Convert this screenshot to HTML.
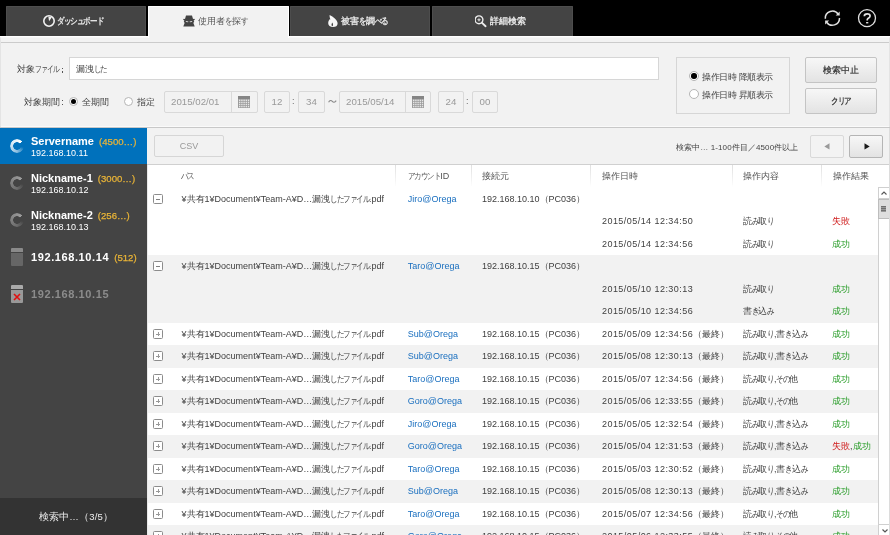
<!DOCTYPE html>
<html lang="ja">
<head>
<meta charset="utf-8">
<style>
*{box-sizing:border-box;margin:0;padding:0}
html,body{width:890px;height:535px;overflow:hidden;background:#f2f2f2;font-family:"Liberation Sans",sans-serif;font-size:9px;color:#444}
i{font-style:normal}
i.k{display:inline-block;width:.72em;transform:scaleX(.84);transform-origin:0 0}
i.k2{width:.67em;transform:scaleX(.76)}
i.col{display:inline-block;width:.6em;margin-left:-.38em}
.a{position:absolute;white-space:nowrap}
#top{position:absolute;left:0;top:0;width:890px;height:36px;background:#000;z-index:2}
#wl{position:absolute;left:0;top:36px;width:890px;height:1px;background:#fff}
.tab{position:absolute;top:6px;height:30px;background:#444;border:1px solid #4d4d4d;border-bottom:0;border-radius:1px 1px 0 0;color:#eee}
.tab.act{background:#f2f2f2;border:1px solid #fff;border-bottom:0;height:32px;top:6px;color:#555;z-index:3}
.tab .t{position:absolute;top:8px;font-size:9.2px;line-height:12px;-webkit-text-stroke:.3px #eee}
.tab.act .t{-webkit-text-stroke:0}
#form{position:absolute;left:0;top:37px;width:890px;height:91px;background:#f2f2f2;border-top:1px solid #f7f7f7;border-left:1px solid #e4e4e4;border-right:1px solid #e4e4e4}
.hl{position:absolute;height:1px}
.dot{position:absolute;width:1.6px;height:1.6px;background:#555}
.inp{position:absolute;background:#fff;border:1px solid #d6d6d6}
.dis{position:absolute;background:#f2f2f2;border:1px solid #d9d9d9;border-radius:2px;color:#999;font-size:9.7px;text-align:center;line-height:20px}
.radio{position:absolute;width:9px;height:9px;border-radius:50%;background:#fff;border:1px solid #b5b5b5}
.radio.on:after{content:"";position:absolute;left:50%;top:50%;width:5.5px;height:5.5px;margin:-2.75px 0 0 -2.75px;border-radius:50%;background:#000}
.btn{position:absolute;border:1px solid #c4c4c4;border-radius:2px;background:linear-gradient(#f7f7f7,#e3e3e3);text-align:center;color:#333}
#side{position:absolute;left:0;top:128px;width:147px;height:407px;background:#444}
#status{position:absolute;left:0;top:498px;width:147px;height:37px;background:#333;color:#eee;text-align:center;line-height:37px;font-size:9.5px;padding-left:5px;letter-spacing:.2px}
.srv{position:absolute;left:0;width:147px;height:37px}
.srv .n{position:absolute;left:31px;font-weight:bold;font-size:11px;color:#fff;white-space:nowrap}
.srv .c{color:#e9b437;font-weight:normal;font-size:9.6px;margin-left:2px;-webkit-text-stroke:.25px #e9b437}
.srv .ip{position:absolute;left:31px;font-size:9px;color:#fff}
.spin{position:absolute;width:14px;height:14px;border-radius:50%;-webkit-mask:radial-gradient(circle,transparent 3.5px,#000 4.1px)}
#main{position:absolute;left:147px;top:128px;width:743px;height:407px;background:#fff}
#tb{position:absolute;left:0;top:0;width:743px;height:37px;background:#f2f2f2;border-bottom:1px solid #d0d0d0}
#hdr{position:absolute;left:0;top:37px;width:743px;height:22.5px;background:#fff}
.hc{position:absolute;top:0;line-height:22px;font-size:9px;color:#555;white-space:nowrap}
.sep{position:absolute;top:0;width:1px;height:22px;background:linear-gradient(#e0e0e0,#f4f4f4 70%,#fff)}
.row{position:absolute;left:0;width:731px;height:22.5px}
.row.g{background:#f2f2f2}
.cell{position:absolute;top:0;line-height:22.5px;font-size:9px;color:#404040;white-space:nowrap}
.blue{color:#1a6fbf}
.ok{color:#279c27}
.ng{color:#d02020}
.pm{position:absolute;left:6px;top:6.5px;width:10px;height:9.5px;border:1px solid #8f8f8f;border-radius:1.5px;background:#fff}
.pm:before{content:"";position:absolute;left:2.5px;top:3.3px;width:3.5px;height:1px;background:#7a7a7a}
.pm.plus:after{content:"";position:absolute;left:3.75px;top:1.8px;width:1px;height:4px;background:#8a8a8a}
#sb{position:absolute;left:731px;top:59px;width:12px;height:348px;background:#fff;border:1px solid #d0d0d0;border-bottom:0}
i.d{letter-spacing:.45px}
</style>
</head>
<body style="will-change:transform">
<div id="top">
  <div id="wl"></div>
  <div class="tab" style="left:6px;width:140px">
    <svg class="a" style="left:35.5px;top:8px" width="12" height="12" viewBox="0 0 12 12"><circle cx="6" cy="6" r="5.2" fill="none" stroke="#f2f2f2" stroke-width="1.6"/><path d="M6.1 6.2 L5.3 1.6 L8.8 2.3 Z" fill="#f2f2f2"/></svg>
    <div class="t" style="left:50px"><i class="k">ダ</i><i class="k">ッ</i><i class="k">シ</i><i class="k">ュ</i><i class="k">ボ</i><i class="k">ー</i><i class="k">ド</i></div>
  </div>
  <div class="tab act" style="left:148px;width:141px">
    <svg class="a" style="left:33.5px;top:8px" width="12" height="12" viewBox="0 0 12 12"><path d="M3 0.4 L9 0.4 L10 4 L2 4 Z" fill="#444"/><path d="M0.3 3.9 H11.7 V5.1 H0.3 Z" fill="#444"/><path d="M1.3 5.1 H10.7 L11.2 7.1 L10.3 7.7 L11.7 11.6 H0.3 L1.7 7.7 L0.8 7.1 Z" fill="#444"/><path d="M2.6 5.9 L5.4 6.5 L5.1 7.3 L3.2 7.0 Z M9.4 5.9 L6.6 6.5 L6.9 7.3 L8.8 7.0 Z" fill="#e8e8e8"/></svg>
    <div class="t" style="left:49px">使用者<i class="k">を</i>探<i class="k">す</i></div>
  </div>
  <div class="tab" style="left:290px;width:140px">
    <svg class="a" style="left:36.5px;top:8px" width="10" height="12" viewBox="0 0 10 12"><path d="M1.6 0 C3.5 0.8 5.3 2 6.8 3.5 C8.6 5.3 9.6 6.9 9.6 8.4 C9.6 10.6 7.8 12 5 12 C2.2 12 0.2 10.6 0.2 8.2 C0.2 6.6 0.9 5.2 1.9 4.1 L2.4 4.7 C2.1 3.2 1.4 1.6 1.6 0 Z" fill="#f7f7f7"/><path d="M4.3 11.2 C3.3 10.8 3.2 9.2 4.3 7.5 C5.4 9.2 5.3 10.8 4.3 11.2 Z" fill="#444"/></svg>
    <div class="t" style="left:50px">被害<i class="k">を</i>調<i class="k">べ</i><i class="k">る</i></div>
  </div>
  <div class="tab" style="left:432px;width:141px">
    <svg class="a" style="left:42px;top:8px" width="13" height="13" viewBox="0 0 13 13"><circle cx="4" cy="4.8" r="3.9" fill="none" stroke="#eee" stroke-width="1.4"/><path d="M6.8 7.6 L10.6 11.2" stroke="#eee" stroke-width="1.9" stroke-linecap="round"/><path d="M4 2.6 L4.6 4.2 L6.2 4.8 L4.6 5.4 L4 7 L3.4 5.4 L1.8 4.8 L3.4 4.2 Z" fill="#e0e0e0"/></svg>
    <div class="t" style="left:57px">詳細検索</div>
  </div>
  <svg class="a" style="left:822px;top:8px" width="20" height="20" viewBox="0 0 20 20"><path d="M3.3 10.7 A7.1 7.1 0 0 1 16.3 6.3" fill="none" stroke="#e0e0e0" stroke-width="1.5"/><path d="M17.7 3.6 L17.7 7.6 L13.7 7.6 Z" fill="#e0e0e0"/><path d="M17.5 10 A7.1 7.1 0 0 1 4.6 14.2" fill="none" stroke="#e0e0e0" stroke-width="1.5"/><path d="M3.1 16.6 L3.1 12.6 L7.1 12.6 Z" fill="#e0e0e0"/></svg>
  <svg class="a" style="left:856px;top:7px" width="22" height="22" viewBox="0 0 22 22"><circle cx="11" cy="11.1" r="8.5" fill="none" stroke="#e0e0e0" stroke-width="1.3"/><path d="M8.3 9.3 C8.3 7.5 9.5 6.9 11.2 6.9 C13 6.9 14.1 7.8 14.1 9.1 C14.1 10.6 12.6 11 11.6 11.8 C11.2 12.2 11.2 12.7 11.2 13.5" fill="none" stroke="#e0e0e0" stroke-width="1.7"/><rect x="10.1" y="15" width="2.2" height="1.4" fill="#e0e0e0"/></svg>
</div>

<div id="form">
  <div class="hl" style="left:0;top:4px;width:888px;background:#cbcbcb"></div>
  <div class="hl" style="left:0;top:88px;width:888px;background:#fafafa"></div>
  <div class="hl" style="left:-1px;top:89px;width:890px;background:#c8c8c8"></div>
  <div class="a" style="left:16px;top:25px">対象<i class="k k2">フ</i><i class="k k2">ァ</i><i class="k k2">イ</i><i class="k k2">ル</i></div>
  <div class="inp" style="left:68px;top:19px;width:590px;height:23px"><div class="a" style="left:6px;top:5px">漏洩<i class="k">し</i><i class="k">た</i></div></div>
  <div class="a" style="left:23px;top:58px">対象期間</div><div class="dot" style="left:60.5px;top:61.5px"></div><div class="dot" style="left:60.5px;top:65.5px"></div><div class="dot" style="left:60.8px;top:29.5px"></div><div class="dot" style="left:60.8px;top:33.3px"></div>
  <div class="radio on" style="left:68px;top:59px"></div>
  <div class="a" style="left:81px;top:58px">全期間</div>
  <div class="radio" style="left:123px;top:59px"></div>
  <div class="a" style="left:136px;top:58px">指定</div>
  <div class="dis" style="left:163px;top:53px;width:94px;height:22px;text-align:left;padding-left:6px">2015/02/01</div>
  <div class="a" style="left:230px;top:54px;width:1px;height:20px;background:#d9d9d9"></div>
  <svg class="a" style="left:237px;top:58px" width="12" height="12" viewBox="0 0 12 12"><rect x="0" y="0" width="12" height="12" rx=".6" fill="#9c9c9c"/><rect x="0" y="0" width="12" height="3" fill="#858585"/><rect x="1" y="3.6" width="1.4" height="1.4" fill="#e6e6e6"/><rect x="1" y="5.7" width="1.4" height="1.4" fill="#e6e6e6"/><rect x="1" y="7.8" width="1.4" height="1.4" fill="#e6e6e6"/><rect x="1" y="9.9" width="1.4" height="1.4" fill="#e6e6e6"/><rect x="3.2" y="3.6" width="1.4" height="1.4" fill="#e6e6e6"/><rect x="3.2" y="5.7" width="1.4" height="1.4" fill="#e6e6e6"/><rect x="3.2" y="7.8" width="1.4" height="1.4" fill="#e6e6e6"/><rect x="3.2" y="9.9" width="1.4" height="1.4" fill="#e6e6e6"/><rect x="5.4" y="3.6" width="1.4" height="1.4" fill="#e6e6e6"/><rect x="5.4" y="5.7" width="1.4" height="1.4" fill="#e6e6e6"/><rect x="5.4" y="7.8" width="1.4" height="1.4" fill="#e6e6e6"/><rect x="5.4" y="9.9" width="1.4" height="1.4" fill="#e6e6e6"/><rect x="7.6" y="3.6" width="1.4" height="1.4" fill="#e6e6e6"/><rect x="7.6" y="5.7" width="1.4" height="1.4" fill="#e6e6e6"/><rect x="7.6" y="7.8" width="1.4" height="1.4" fill="#e6e6e6"/><rect x="7.6" y="9.9" width="1.4" height="1.4" fill="#e6e6e6"/><rect x="9.8" y="3.6" width="1.4" height="1.4" fill="#e6e6e6"/><rect x="9.8" y="5.7" width="1.4" height="1.4" fill="#e6e6e6"/><rect x="9.8" y="7.8" width="1.4" height="1.4" fill="#e6e6e6"/><rect x="9.8" y="9.9" width="1.4" height="1.4" fill="#e6e6e6"/></svg>
  <div class="dis" style="left:263px;top:53px;width:26px;height:22px">12</div>
  <div class="a" style="left:291px;top:58px;color:#666">:</div>
  <div class="dis" style="left:297px;top:53px;width:27px;height:22px">34</div>
  <svg class="a" style="left:326.5px;top:61px" width="9" height="5" viewBox="0 0 9 5"><path d="M0.6 3.2 C1.8 1.2 3.2 1 4.3 2.3 C5.4 3.6 6.8 3.6 8.2 1.6" fill="none" stroke="#8a8a8a" stroke-width="1.1"/></svg>
  <div class="dis" style="left:338px;top:53px;width:92px;height:22px;text-align:left;padding-left:6px">2015/05/14</div>
  <div class="a" style="left:404px;top:54px;width:1px;height:20px;background:#d9d9d9"></div>
  <svg class="a" style="left:411px;top:58px" width="12" height="12" viewBox="0 0 12 12"><rect x="0" y="0" width="12" height="12" rx=".6" fill="#9c9c9c"/><rect x="0" y="0" width="12" height="3" fill="#858585"/><rect x="1" y="3.6" width="1.4" height="1.4" fill="#e6e6e6"/><rect x="1" y="5.7" width="1.4" height="1.4" fill="#e6e6e6"/><rect x="1" y="7.8" width="1.4" height="1.4" fill="#e6e6e6"/><rect x="1" y="9.9" width="1.4" height="1.4" fill="#e6e6e6"/><rect x="3.2" y="3.6" width="1.4" height="1.4" fill="#e6e6e6"/><rect x="3.2" y="5.7" width="1.4" height="1.4" fill="#e6e6e6"/><rect x="3.2" y="7.8" width="1.4" height="1.4" fill="#e6e6e6"/><rect x="3.2" y="9.9" width="1.4" height="1.4" fill="#e6e6e6"/><rect x="5.4" y="3.6" width="1.4" height="1.4" fill="#e6e6e6"/><rect x="5.4" y="5.7" width="1.4" height="1.4" fill="#e6e6e6"/><rect x="5.4" y="7.8" width="1.4" height="1.4" fill="#e6e6e6"/><rect x="5.4" y="9.9" width="1.4" height="1.4" fill="#e6e6e6"/><rect x="7.6" y="3.6" width="1.4" height="1.4" fill="#e6e6e6"/><rect x="7.6" y="5.7" width="1.4" height="1.4" fill="#e6e6e6"/><rect x="7.6" y="7.8" width="1.4" height="1.4" fill="#e6e6e6"/><rect x="7.6" y="9.9" width="1.4" height="1.4" fill="#e6e6e6"/><rect x="9.8" y="3.6" width="1.4" height="1.4" fill="#e6e6e6"/><rect x="9.8" y="5.7" width="1.4" height="1.4" fill="#e6e6e6"/><rect x="9.8" y="7.8" width="1.4" height="1.4" fill="#e6e6e6"/><rect x="9.8" y="9.9" width="1.4" height="1.4" fill="#e6e6e6"/></svg>
  <div class="dis" style="left:437px;top:53px;width:26px;height:22px">24</div>
  <div class="a" style="left:465px;top:58px;color:#666">:</div>
  <div class="dis" style="left:471px;top:53px;width:26px;height:22px">00</div>
  <div class="a" style="left:675px;top:19px;width:114px;height:57px;border:1px solid #d6d6d6"></div>
  <div class="radio on" style="left:688px;top:33px;width:10px;height:10px"></div>
  <div class="a" style="left:701px;top:33px;letter-spacing:-.4px">操作日時 降順表示</div>
  <div class="radio" style="left:688px;top:51px;width:10px;height:10px"></div>
  <div class="a" style="left:701px;top:51px;letter-spacing:-.4px">操作日時 昇順表示</div>
  <div class="btn" style="left:804px;top:19px;width:72px;height:26px;line-height:24px;-webkit-text-stroke:.2px #333">検索中止</div>
  <div class="btn" style="left:804px;top:50px;width:72px;height:26px;line-height:24px;-webkit-text-stroke:.2px #333"><i class="k">ク</i><i class="k">リ</i><i class="k">ア</i></div>
</div>

<div id="side">
  <div class="srv" style="top:0;height:36px;background:#0071bc">
    <div class="spin" style="left:10px;top:11px;background:conic-gradient(from 100deg,rgba(255,255,255,0) 0deg,rgba(255,255,255,.25) 30deg,rgba(255,255,255,.55) 80deg,rgba(255,255,255,.8) 170deg,#fff 305deg,rgba(255,255,255,0) 310deg)"></div>
    <div class="n" style="top:7px">Servername <span class="c">(4500…)</span></div>
    <div class="ip" style="top:20px">192.168.10.11</div>
  </div>
  <div class="srv" style="top:37px">
    <div class="spin" style="left:10px;top:11px;background:conic-gradient(from 100deg,rgba(110,110,110,0) 0deg,#555 30deg,#6c6c6c 80deg,#808080 170deg,#9c9c9c 305deg,rgba(110,110,110,0) 310deg)"></div>
    <div class="n" style="top:7px">Nickname-1 <span class="c">(3000…)</span></div>
    <div class="ip" style="top:20px">192.168.10.12</div>
  </div>
  <div class="srv" style="top:74px">
    <div class="spin" style="left:10px;top:11px;background:conic-gradient(from 100deg,rgba(110,110,110,0) 0deg,#555 30deg,#6c6c6c 80deg,#808080 170deg,#9c9c9c 305deg,rgba(110,110,110,0) 310deg)"></div>
    <div class="n" style="top:7px">Nickname-2 <span class="c">(256…)</span></div>
    <div class="ip" style="top:20px">192.168.10.13</div>
  </div>
  <div class="srv" style="top:111px">
    <div class="a" style="left:11px;top:9px;width:12px;height:18px;background:#666;border-radius:1px;border-top:4px solid #8a8a8a;box-shadow:inset 0 1px 0 #444"></div>
    <div class="n" style="top:12px"><i style="letter-spacing:.6px">192.168.10.14</i> <span class="c">(512)</span></div>
  </div>
  <div class="srv" style="top:148px">
    <div class="a" style="left:11px;top:9px;width:12px;height:18px;background:#999;border-radius:1px;border-top:4px solid #aaa;box-shadow:inset 0 1px 0 #444"></div>
    <svg class="a" style="left:13px;top:17px" width="8" height="8" viewBox="0 0 8 8"><path d="M1 1 L7 7 M7 1 L1 7" stroke="#e01010" stroke-width="1.6"/></svg>
    <div class="n" style="top:12px;color:#8c8c8c;letter-spacing:.6px">192.168.10.15</div>
  </div>
</div>
<div id="status">検索中…（3/5）</div>
<div id="main">
  <div id="tb">
    <div class="btn" style="left:7px;top:7px;width:70px;height:22px;line-height:20px;background:#f2f2f2;border-color:#d6d6d6;color:#999">CSV</div>
    <div class="a" style="left:529px;top:13.5px;font-size:8px;letter-spacing:.1px">検索中… 1-100件目／4500件以上</div>
    <div class="btn" style="left:663px;top:7px;width:34px;height:23px;background:#f3f3f3;border-color:#d9d9d9"><svg class="a" style="left:12.5px;top:7px" width="6" height="7" viewBox="0 0 6 7"><path d="M5.5 0.2 L5.5 6.6 L0.3 3.4 Z" fill="#9a9a9a"/></svg></div>
    <div class="btn" style="left:702px;top:7px;width:34px;height:23px;border-color:#b5b5b5"><svg class="a" style="left:13.5px;top:7px" width="6" height="7" viewBox="0 0 6 7"><path d="M0.5 0.2 L0.5 6.6 L5.7 3.4 Z" fill="#1a1a1a"/></svg></div>
  </div>
  <div id="hdr">
    <div class="hc" style="left:34px"><i class="k">パ</i><i class="k">ス</i></div>
    <div class="sep" style="left:248px"></div><div class="hc" style="left:261px"><i class="k">ア</i><i class="k">カ</i><i class="k">ウ</i><i class="k">ン</i><i class="k">ト</i>ID</div>
    <div class="sep" style="left:324px"></div><div class="hc" style="left:335px">接続元</div>
    <div class="sep" style="left:443px"></div><div class="hc" style="left:455px">操作日時</div>
    <div class="sep" style="left:585px"></div><div class="hc" style="left:596px">操作内容</div>
    <div class="sep" style="left:674px"></div><div class="hc" style="left:686px">操作結果</div>
  </div>
  <div class="row" style="top:59.5px"><svg class="a" style="left:6px;top:6.5px" width="10" height="10" viewBox="0 0 10 10"><rect x=".5" y=".5" width="9" height="9" rx="1" fill="#fff" stroke="#8c8c8c"/><path d="M3 5 H7" stroke="#808080" stroke-width="1" shape-rendering="crispEdges"/></svg><div class="cell" style="left:34.6px">¥共有1¥Document¥Team-A¥D…漏洩<i class="k">し</i><i class="k">た</i><i class="k">フ</i><i class="k">ァ</i><i class="k">イ</i><i class="k">ル</i>.pdf</div><div class="cell blue" style="left:260.8px">Jiro@Orega</div><div class="cell" style="left:335px">192.168.10.10（PC036）</div></div>
  <div class="row" style="top:82px"><div class="cell" style="left:455px"><i class="d">2015/05/14 12:34:50</i></div><div class="cell" style="left:596px">読<i class="k">み</i>取<i class="k">り</i></div><div class="cell" style="left:685px"><span class="ng">失敗</span></div></div>
  <div class="row" style="top:104.5px"><div class="cell" style="left:455px"><i class="d">2015/05/14 12:34:56</i></div><div class="cell" style="left:596px">読<i class="k">み</i>取<i class="k">り</i></div><div class="cell" style="left:685px"><span class="ok">成功</span></div></div>
  <div class="row g" style="top:127px"><svg class="a" style="left:6px;top:6px" width="10" height="10" viewBox="0 0 10 10"><rect x=".5" y=".5" width="9" height="9" rx="1" fill="#fff" stroke="#8c8c8c"/><path d="M3 5 H7" stroke="#808080" stroke-width="1" shape-rendering="crispEdges"/></svg><div class="cell" style="left:34.6px">¥共有1¥Document¥Team-A¥D…漏洩<i class="k">し</i><i class="k">た</i><i class="k">フ</i><i class="k">ァ</i><i class="k">イ</i><i class="k">ル</i>.pdf</div><div class="cell blue" style="left:260.8px">Taro@Orega</div><div class="cell" style="left:335px">192.168.10.15（PC036）</div></div>
  <div class="row g" style="top:149.5px"><div class="cell" style="left:455px"><i class="d">2015/05/10 12:30:13</i></div><div class="cell" style="left:596px">読<i class="k">み</i>取<i class="k">り</i></div><div class="cell" style="left:685px"><span class="ok">成功</span></div></div>
  <div class="row g" style="top:172px"><div class="cell" style="left:455px"><i class="d">2015/05/10 12:34:56</i></div><div class="cell" style="left:596px">書<i class="k">き</i>込<i class="k">み</i></div><div class="cell" style="left:685px"><span class="ok">成功</span></div></div>
  <div class="row" style="top:194.5px"><svg class="a" style="left:6px;top:6.5px" width="10" height="10" viewBox="0 0 10 10"><rect x=".5" y=".5" width="9" height="9" rx="1" fill="#fff" stroke="#8c8c8c"/><path d="M3 5 H7 M5 3 V7" stroke="#999" stroke-width="1" shape-rendering="crispEdges"/></svg><div class="cell" style="left:34.6px">¥共有1¥Document¥Team-A¥D…漏洩<i class="k">し</i><i class="k">た</i><i class="k">フ</i><i class="k">ァ</i><i class="k">イ</i><i class="k">ル</i>.pdf</div><div class="cell blue" style="left:260.8px">Sub@Orega</div><div class="cell" style="left:335px">192.168.10.15（PC036）</div><div class="cell" style="left:455px"><i class="d">2015/05/09 12:34:56</i>（最終）</div><div class="cell" style="left:596px">読<i class="k">み</i>取<i class="k">り</i>,書<i class="k">き</i>込<i class="k">み</i></div><div class="cell" style="left:685px"><span class="ok">成功</span></div></div>
  <div class="row g" style="top:217px"><svg class="a" style="left:6px;top:6px" width="10" height="10" viewBox="0 0 10 10"><rect x=".5" y=".5" width="9" height="9" rx="1" fill="#fff" stroke="#8c8c8c"/><path d="M3 5 H7 M5 3 V7" stroke="#999" stroke-width="1" shape-rendering="crispEdges"/></svg><div class="cell" style="left:34.6px">¥共有1¥Document¥Team-A¥D…漏洩<i class="k">し</i><i class="k">た</i><i class="k">フ</i><i class="k">ァ</i><i class="k">イ</i><i class="k">ル</i>.pdf</div><div class="cell blue" style="left:260.8px">Sub@Orega</div><div class="cell" style="left:335px">192.168.10.15（PC036）</div><div class="cell" style="left:455px"><i class="d">2015/05/08 12:30:13</i>（最終）</div><div class="cell" style="left:596px">読<i class="k">み</i>取<i class="k">り</i>,書<i class="k">き</i>込<i class="k">み</i></div><div class="cell" style="left:685px"><span class="ok">成功</span></div></div>
  <div class="row" style="top:239.5px"><svg class="a" style="left:6px;top:6.5px" width="10" height="10" viewBox="0 0 10 10"><rect x=".5" y=".5" width="9" height="9" rx="1" fill="#fff" stroke="#8c8c8c"/><path d="M3 5 H7 M5 3 V7" stroke="#999" stroke-width="1" shape-rendering="crispEdges"/></svg><div class="cell" style="left:34.6px">¥共有1¥Document¥Team-A¥D…漏洩<i class="k">し</i><i class="k">た</i><i class="k">フ</i><i class="k">ァ</i><i class="k">イ</i><i class="k">ル</i>.pdf</div><div class="cell blue" style="left:260.8px">Taro@Orega</div><div class="cell" style="left:335px">192.168.10.15（PC036）</div><div class="cell" style="left:455px"><i class="d">2015/05/07 12:34:56</i>（最終）</div><div class="cell" style="left:596px">読<i class="k">み</i>取<i class="k">り</i>,<i class="k">そ</i><i class="k">の</i>他</div><div class="cell" style="left:685px"><span class="ok">成功</span></div></div>
  <div class="row g" style="top:262px"><svg class="a" style="left:6px;top:6px" width="10" height="10" viewBox="0 0 10 10"><rect x=".5" y=".5" width="9" height="9" rx="1" fill="#fff" stroke="#8c8c8c"/><path d="M3 5 H7 M5 3 V7" stroke="#999" stroke-width="1" shape-rendering="crispEdges"/></svg><div class="cell" style="left:34.6px">¥共有1¥Document¥Team-A¥D…漏洩<i class="k">し</i><i class="k">た</i><i class="k">フ</i><i class="k">ァ</i><i class="k">イ</i><i class="k">ル</i>.pdf</div><div class="cell blue" style="left:260.8px">Goro@Orega</div><div class="cell" style="left:335px">192.168.10.15（PC036）</div><div class="cell" style="left:455px"><i class="d">2015/05/06 12:33:55</i>（最終）</div><div class="cell" style="left:596px">読<i class="k">み</i>取<i class="k">り</i>,<i class="k">そ</i><i class="k">の</i>他</div><div class="cell" style="left:685px"><span class="ok">成功</span></div></div>
  <div class="row" style="top:284.5px"><svg class="a" style="left:6px;top:6.5px" width="10" height="10" viewBox="0 0 10 10"><rect x=".5" y=".5" width="9" height="9" rx="1" fill="#fff" stroke="#8c8c8c"/><path d="M3 5 H7 M5 3 V7" stroke="#999" stroke-width="1" shape-rendering="crispEdges"/></svg><div class="cell" style="left:34.6px">¥共有1¥Document¥Team-A¥D…漏洩<i class="k">し</i><i class="k">た</i><i class="k">フ</i><i class="k">ァ</i><i class="k">イ</i><i class="k">ル</i>.pdf</div><div class="cell blue" style="left:260.8px">Jiro@Orega</div><div class="cell" style="left:335px">192.168.10.15（PC036）</div><div class="cell" style="left:455px"><i class="d">2015/05/05 12:32:54</i>（最終）</div><div class="cell" style="left:596px">読<i class="k">み</i>取<i class="k">り</i>,書<i class="k">き</i>込<i class="k">み</i></div><div class="cell" style="left:685px"><span class="ok">成功</span></div></div>
  <div class="row g" style="top:307px"><svg class="a" style="left:6px;top:6px" width="10" height="10" viewBox="0 0 10 10"><rect x=".5" y=".5" width="9" height="9" rx="1" fill="#fff" stroke="#8c8c8c"/><path d="M3 5 H7 M5 3 V7" stroke="#999" stroke-width="1" shape-rendering="crispEdges"/></svg><div class="cell" style="left:34.6px">¥共有1¥Document¥Team-A¥D…漏洩<i class="k">し</i><i class="k">た</i><i class="k">フ</i><i class="k">ァ</i><i class="k">イ</i><i class="k">ル</i>.pdf</div><div class="cell blue" style="left:260.8px">Goro@Orega</div><div class="cell" style="left:335px">192.168.10.15（PC036）</div><div class="cell" style="left:455px"><i class="d">2015/05/04 12:31:53</i>（最終）</div><div class="cell" style="left:596px">読<i class="k">み</i>取<i class="k">り</i>,書<i class="k">き</i>込<i class="k">み</i></div><div class="cell" style="left:685px"><span class="ng">失敗</span>,<span class="ok">成功</span></div></div>
  <div class="row" style="top:329.5px"><svg class="a" style="left:6px;top:6.5px" width="10" height="10" viewBox="0 0 10 10"><rect x=".5" y=".5" width="9" height="9" rx="1" fill="#fff" stroke="#8c8c8c"/><path d="M3 5 H7 M5 3 V7" stroke="#999" stroke-width="1" shape-rendering="crispEdges"/></svg><div class="cell" style="left:34.6px">¥共有1¥Document¥Team-A¥D…漏洩<i class="k">し</i><i class="k">た</i><i class="k">フ</i><i class="k">ァ</i><i class="k">イ</i><i class="k">ル</i>.pdf</div><div class="cell blue" style="left:260.8px">Taro@Orega</div><div class="cell" style="left:335px">192.168.10.15（PC036）</div><div class="cell" style="left:455px"><i class="d">2015/05/03 12:30:52</i>（最終）</div><div class="cell" style="left:596px">読<i class="k">み</i>取<i class="k">り</i>,書<i class="k">き</i>込<i class="k">み</i></div><div class="cell" style="left:685px"><span class="ok">成功</span></div></div>
  <div class="row g" style="top:352px"><svg class="a" style="left:6px;top:6px" width="10" height="10" viewBox="0 0 10 10"><rect x=".5" y=".5" width="9" height="9" rx="1" fill="#fff" stroke="#8c8c8c"/><path d="M3 5 H7 M5 3 V7" stroke="#999" stroke-width="1" shape-rendering="crispEdges"/></svg><div class="cell" style="left:34.6px">¥共有1¥Document¥Team-A¥D…漏洩<i class="k">し</i><i class="k">た</i><i class="k">フ</i><i class="k">ァ</i><i class="k">イ</i><i class="k">ル</i>.pdf</div><div class="cell blue" style="left:260.8px">Sub@Orega</div><div class="cell" style="left:335px">192.168.10.15（PC036）</div><div class="cell" style="left:455px"><i class="d">2015/05/08 12:30:13</i>（最終）</div><div class="cell" style="left:596px">読<i class="k">み</i>取<i class="k">り</i>,書<i class="k">き</i>込<i class="k">み</i></div><div class="cell" style="left:685px"><span class="ok">成功</span></div></div>
  <div class="row" style="top:374.5px"><svg class="a" style="left:6px;top:6.5px" width="10" height="10" viewBox="0 0 10 10"><rect x=".5" y=".5" width="9" height="9" rx="1" fill="#fff" stroke="#8c8c8c"/><path d="M3 5 H7 M5 3 V7" stroke="#999" stroke-width="1" shape-rendering="crispEdges"/></svg><div class="cell" style="left:34.6px">¥共有1¥Document¥Team-A¥D…漏洩<i class="k">し</i><i class="k">た</i><i class="k">フ</i><i class="k">ァ</i><i class="k">イ</i><i class="k">ル</i>.pdf</div><div class="cell blue" style="left:260.8px">Taro@Orega</div><div class="cell" style="left:335px">192.168.10.15（PC036）</div><div class="cell" style="left:455px"><i class="d">2015/05/07 12:34:56</i>（最終）</div><div class="cell" style="left:596px">読<i class="k">み</i>取<i class="k">り</i>,<i class="k">そ</i><i class="k">の</i>他</div><div class="cell" style="left:685px"><span class="ok">成功</span></div></div>
  <div class="row g" style="top:397px"><svg class="a" style="left:6px;top:6px" width="10" height="10" viewBox="0 0 10 10"><rect x=".5" y=".5" width="9" height="9" rx="1" fill="#fff" stroke="#8c8c8c"/><path d="M3 5 H7 M5 3 V7" stroke="#999" stroke-width="1" shape-rendering="crispEdges"/></svg><div class="cell" style="left:34.6px">¥共有1¥Document¥Team-A¥D…漏洩<i class="k">し</i><i class="k">た</i><i class="k">フ</i><i class="k">ァ</i><i class="k">イ</i><i class="k">ル</i>.pdf</div><div class="cell blue" style="left:260.8px">Goro@Orega</div><div class="cell" style="left:335px">192.168.10.15（PC036）</div><div class="cell" style="left:455px"><i class="d">2015/05/06 12:33:55</i>（最終）</div><div class="cell" style="left:596px">読<i class="k">み</i>取<i class="k">り</i>,<i class="k">そ</i><i class="k">の</i>他</div><div class="cell" style="left:685px"><span class="ok">成功</span></div></div>
  <div id="sb">
    <div class="a" style="left:0;top:0;width:10px;height:11px;border-bottom:1px solid #d0d0d0"><svg class="a" style="left:2px;top:2.8px" width="6" height="4" viewBox="0 0 6 4"><path d="M0.5 3.5 L3 1 L5.5 3.5" fill="none" stroke="#555" stroke-width="1.1"/></svg></div>
    <div class="a" style="left:-1px;top:11px;width:12px;height:20px;background:#dedede;border:1px solid #bdbdbd"><div class="a" style="left:2px;top:6px;width:5px;height:6px;background:repeating-linear-gradient(#707070 0 1px,#9a9a9a 1px 2px)"></div></div>
    <div class="a" style="left:0;top:336px;width:10px;height:11px;border-top:1px solid #d0d0d0"><svg class="a" style="left:2.5px;top:3.5px" width="6" height="4" viewBox="0 0 6 4"><path d="M0.5 0.5 L3 3 L5.5 0.5" fill="none" stroke="#555" stroke-width="1.2"/></svg></div>
  </div>
</div>
<div class="a" style="left:147px;top:165px;width:1px;height:370px;background:#e9e9e9;z-index:5"></div>
<div class="a" style="left:889px;top:128px;width:1px;height:407px;background:#dcdcdc;z-index:5"></div>
</body>
</html>
